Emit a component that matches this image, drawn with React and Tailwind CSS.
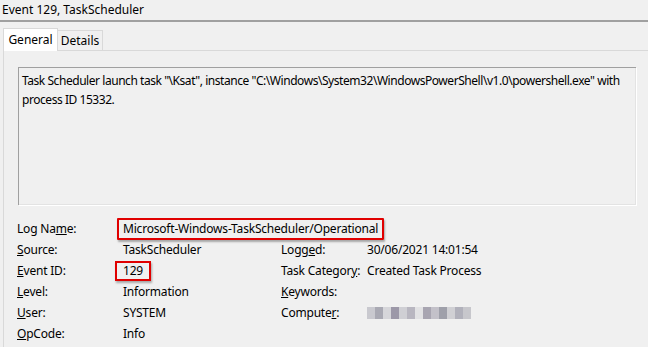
const font = { fontFamily: '"Noto Sans", "Open Sans", sans-serif' }

function Acc({ pre, u, post }) {
  return (
    <span>
      {pre}
      <span className="underline underline-offset-[1px]">{u}</span>
      {post}
    </span>
  )
}

function Blur() {
  const blocks = ['#c9c9cf', '#a9a9b3', '#d6d6da', '#9c98a8', '#cfcfd4', '#b8b6c0', '#e2e2e4', '#a8a5b1', '#c3c1c9', '#9fa0aa', '#d0d0d4', '#b1b1bb', '#c7c7cc']
  return (
    <div className="flex h-[14px] items-center">
      {blocks.map((c, i) => (
        <div key={i} className="h-[12px] w-[8px]" style={{ background: c }} />
      ))}
    </div>
  )
}

export default function App() {
  return (
    <div className="h-[347px] w-[648px] overflow-hidden bg-[#f0f0f0] text-[12px] text-black" style={font}>
      <div className="flex h-[20px] items-center pl-[2px] leading-none">Event 129, TaskScheduler</div>
      <div className="h-[2px] bg-[#a0a0a0]" />

      <div className="mt-[6px] flex pl-[3px]">
        <div className="relative z-10 -mb-px flex h-[23px] w-[55px] items-center justify-center border border-b-0 border-[#d9d9d9] bg-white">
          General
        </div>
        <div className="mt-[2px] flex h-[20px] w-[45px] items-center justify-center border border-b-0 border-l-0 border-[#d9d9d9] bg-[#f0f0f0]">
          Details
        </div>
      </div>

      <div className="ml-[3px] h-[300px] border-l border-t border-[#d9d9d9] pl-[14px] pt-[16px]">
        <div className="h-[138px] w-[618px] border-l border-t border-[#a0a0a0] shadow-[1px_1px_0_#ffffff]">
          <div className="h-full w-full border-b border-r border-[#e3e3e3] px-[3px] pt-[3px] leading-[19px] tracking-[-0.45px]">
            Task Scheduler launch task "\Ksat", instance "C:\Windows\System32\WindowsPowerShell\v1.0\powershell.exe" with process ID 15332.
          </div>
        </div>

        <div className="mt-[13px] grid grid-cols-[106px_158px_86px_1fr] auto-rows-[21px] items-center -ml-[1px] tracking-[-0.2px]">
          <Acc pre="Log Na" u="m" post="e:" />
          <div className="col-span-3">
            <span className="-ml-[6px] inline-block rounded-[1px] border-2 border-[#e00000] px-[4px] py-[1px] leading-[16px] shadow-[1px_2px_2px_rgba(0,0,0,0.3)]">
              Microsoft-Windows-TaskScheduler/Operational
            </span>
          </div>

          <Acc pre="" u="S" post="ource:" />
          <div>TaskScheduler</div>
          <Acc pre="Logg" u="e" post="d:" />
          <div>30/06/2021 14:01:54</div>

          <Acc pre="" u="E" post="vent ID:" />
          <div>
            <span className="-ml-[8px] inline-block border-2 border-[#e00000] px-[6px] py-[1px] leading-[14px] shadow-[1px_2px_2px_rgba(0,0,0,0.3)]">
              129
            </span>
          </div>
          <Acc pre="Task Categor" u="y" post=":" />
          <div>Created Task Process</div>

          <Acc pre="" u="L" post="evel:" />
          <div>Information</div>
          <Acc pre="" u="K" post="eywords:" />
          <div />

          <Acc pre="" u="U" post="ser:" />
          <div>SYSTEM</div>
          <Acc pre="Compute" u="r" post=":" />
          <Blur />

          <Acc pre="" u="O" post="pCode:" />
          <div>Info</div>
          <div />
          <div />
        </div>
      </div>
    </div>
  )
}
